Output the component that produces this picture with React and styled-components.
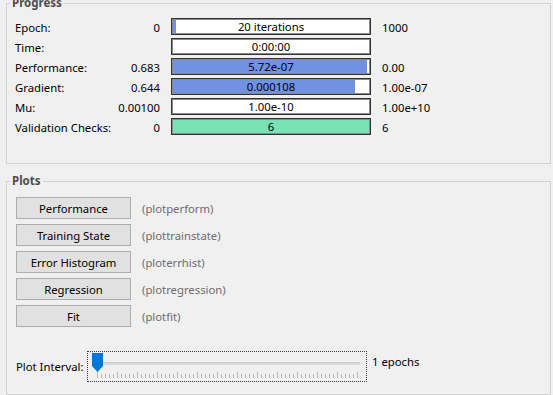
import React from "react";
import styled, { createGlobalStyle } from "styled-components";

const Global = createGlobalStyle`
  html, body { margin: 0; padding: 0; background: #f0f0f0; }
  body { font-family: "Segoe UI", "Noto Sans", "Liberation Sans", sans-serif; font-size: 11.3px; color: #000; }
  #root { width: 553px; height: 395px; overflow: hidden; }
`;

const Page = styled.div`
  width: 553px;
  height: 395px;
  overflow: hidden;
  padding: 0 2px 0 6px;
  box-sizing: border-box;
  display: flex;
  flex-direction: column;
`;

const Group = styled.fieldset`
  margin: ${(p) => p.$mt}px 0 0 0;
  padding: 0;
  border: 1px solid #d2d2d2;
  min-width: 0;
  flex: ${(p) => (p.$grow ? "1 0 auto" : "0 0 auto")};
`;

const Legend = styled.legend`
  margin-left: 3px;
  padding: 0 2px;
  font-weight: bold;
  color: #4d4d4d;
  line-height: 14px;
  font-size: 11.5px;
`;

const ProgressBody = styled.div`
  padding: 8px 0 28px 8px;
  display: grid;
  grid-template-columns: 84px 50px 200px auto;
  grid-auto-rows: 17px;
  column-gap: 11px;
  row-gap: 3px;
  align-items: center;
`;

const Label = styled.div`
  line-height: 19px;
  height: 17px;
  white-space: nowrap;
`;

const Value = styled.div`
  text-align: right;
  line-height: 19px;
  height: 17px;
  white-space: nowrap;
`;

const Bar = styled.div`
  position: relative;
  height: 17px;
  box-sizing: border-box;
  border: 1px solid #333;
  background: #fff;
  box-shadow: inset 0 0 0 1px #8a8a8a;
  overflow: hidden;
`;

const Fill = styled.div`
  position: absolute;
  left: 1px;
  top: 1px;
  bottom: 1px;
  background: ${(p) => p.$color};
`;

const BarText = styled.div`
  position: relative;
  text-align: center;
  line-height: 15px;
  white-space: nowrap;
`;

const PlotsBody = styled.div`
  padding: 9px 0 0 9px;
  display: flex;
  flex-direction: column;
`;

const PlotList = styled.div`
  display: flex;
  flex-direction: column;
  gap: 5px;
`;

const PlotRow = styled.div`
  display: flex;
  align-items: center;
  gap: 11px;
`;

const PlotButton = styled.button`
  width: 115px;
  height: 22px;
  margin: 0;
  padding: 0;
  background: #e1e1e1;
  border: 1px solid #adadad;
  font: inherit;
  color: #000;
  text-align: center;
`;

const FnName = styled.span`
  color: #6d6d6d;
`;

const IntervalRow = styled.div`
  margin-top: 24px;
  display: flex;
  align-items: flex-start;
`;

const IntervalLabel = styled.div`
  width: 71px;
  padding-top: 8px;
  line-height: 16px;
  white-space: nowrap;
`;

const SliderBox = styled.div`
  width: 280px;
  height: 31px;
  box-sizing: border-box;
  border: 1px dotted #3a3a3a;
  display: block;
`;

const Epochs = styled.div`
  margin-left: 5px;
  padding-top: 3px;
  line-height: 16px;
  white-space: nowrap;
`;

const rows = [
  { label: "Epoch:", v: "0", text: "20 iterations", fill: 3, color: "#7092e0", right: "1000" },
  { label: "Time:", v: "", text: "0:00:00", fill: 0, color: "#7092e0", right: "" },
  { label: "Performance:", v: "0.683", text: "5.72e-07", fill: 194, color: "#7092e0", right: "0.00" },
  { label: "Gradient:", v: "0.644", text: "0.000108", fill: 182, color: "#7092e0", right: "1.00e-07" },
  { label: "Mu:", v: "0.00100", text: "1.00e-10", fill: 0, color: "#7092e0", right: "1.00e+10" },
  { label: "Validation Checks:", v: "0", text: "6", fill: 196, color: "#78e2b4", right: "6" },
];

const plots = [
  ["Performance", "(plotperform)"],
  ["Training State", "(plottrainstate)"],
  ["Error Histogram", "(ploterrhist)"],
  ["Regression", "(plotregression)"],
  ["Fit", "(plotfit)"],
];

function SliderArt() {
  const ticks = [];
  for (let i = 0; i < 66; i++) {
    const x = 9.5 + i * 4;
    const major = i % 5 === 0;
    ticks.push(
      <line key={i} x1={x} x2={x} y1={major ? 20 : 22} y2={26} stroke="#b9b9b9" strokeWidth="1" />
    );
  }
  return (
    <svg width="278" height="29" viewBox="0 0 278 29">
      <rect x="6" y="10" width="266" height="3" fill="#dadada" />
      <rect x="6" y="10" width="266" height="1" fill="#cfcfcf" />
      {ticks}
      <path d="M4 1 H15 V14 L9.5 20 L4 14 Z" fill="#0078d7" />
    </svg>
  );
}

export default function App() {
  return (
    <>
      <Global />
      <Page>
        <Group $mt={-4}>
          <Legend>Progress</Legend>
          <ProgressBody>
            {rows.map((r) => (
              <React.Fragment key={r.label}>
                <Label>{r.label}</Label>
                <Value>{r.v}</Value>
                <Bar>
                  {r.fill > 0 && <Fill $color={r.color} style={{ width: r.fill + "px" }} />}
                  <BarText>{r.text}</BarText>
                </Bar>
                <Label>{r.right}</Label>
              </React.Fragment>
            ))}
          </ProgressBody>
        </Group>
        <Group $mt={10} $grow>
          <Legend>Plots</Legend>
          <PlotsBody>
            <PlotList>
              {plots.map(([b, f]) => (
                <PlotRow key={b}>
                  <PlotButton>{b}</PlotButton>
                  <FnName>{f}</FnName>
                </PlotRow>
              ))}
            </PlotList>
            <IntervalRow>
              <IntervalLabel>Plot Interval:</IntervalLabel>
              <SliderBox>
                <SliderArt />
              </SliderBox>
              <Epochs>1 epochs</Epochs>
            </IntervalRow>
          </PlotsBody>
        </Group>
      </Page>
    </>
  );
}
